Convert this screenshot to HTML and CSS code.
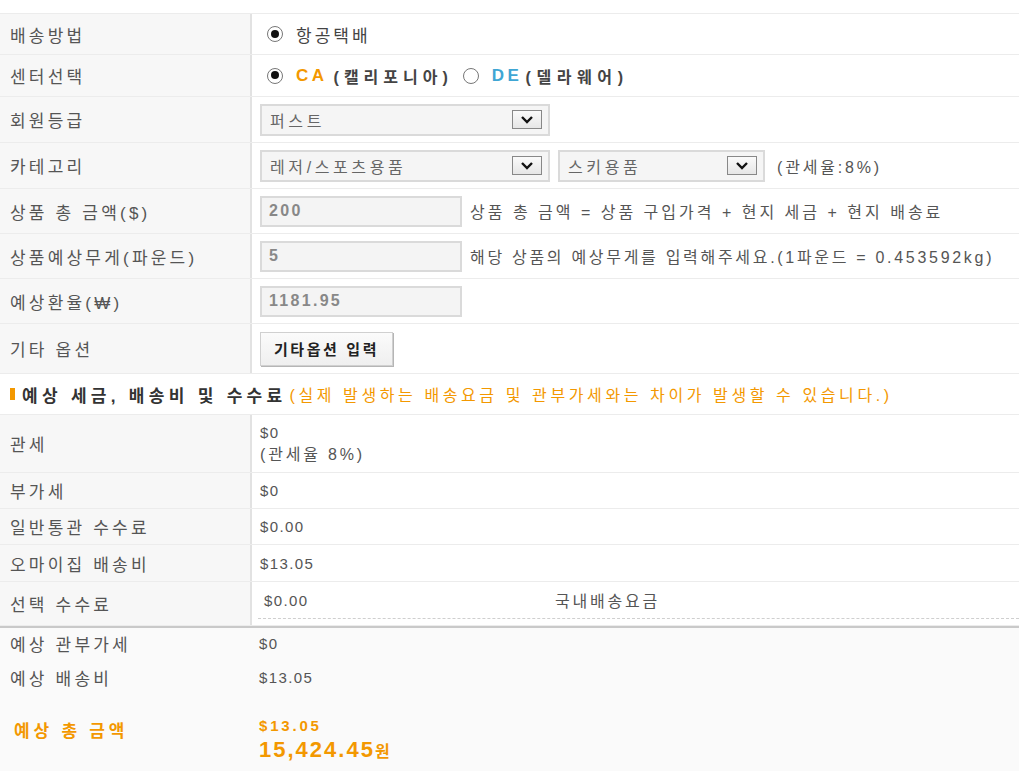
FILE: index.html
```html
<!DOCTYPE html>
<html lang="ko">
<head>
    <meta charset="UTF-8">
    <title>배송비 계산기</title>
    <link rel="stylesheet" href="styles.css">
</head>
<body>
    <div class="calc">
        <div class="form">
            <div class="row r1">
                <div class="th">배송방법</div>
                <div class="td">
                    <span class="radio on"></span><span class="opt">항공택배</span>
                </div>
            </div>
            <div class="row r2">
                <div class="th">센터선택</div>
                <div class="td">
                    <span class="radio on"></span><b class="ca">CA</b><b class="area">(캘리포니아)</b>
                    <span class="radio"></span><b class="de">DE</b><b class="area">(델라웨어)</b>
                </div>
            </div>
            <div class="row r3">
                <div class="th">회원등급</div>
                <div class="td">
                    <div class="select wide"><span>퍼스트</span><i class="arrow"><svg width="14" height="9" viewBox="0 0 14 9"><path d="M2 2l5 5 5-5" fill="none" stroke="#111" stroke-width="2.4"/></svg></i></div>
                </div>
            </div>
            <div class="row r4">
                <div class="th">카테고리</div>
                <div class="td">
                    <div class="select wide"><span>레저/스포츠용품</span><i class="arrow"><svg width="14" height="9" viewBox="0 0 14 9"><path d="M2 2l5 5 5-5" fill="none" stroke="#111" stroke-width="2.4"/></svg></i></div>
                    <div class="select narrow"><span>스키용품</span><i class="arrow"><svg width="14" height="9" viewBox="0 0 14 9"><path d="M2 2l5 5 5-5" fill="none" stroke="#111" stroke-width="2.4"/></svg></i></div>
                    <span class="note rate">(관세율:8%)</span>
                </div>
            </div>
            <div class="row r5">
                <div class="th">상품 총 금액($)</div>
                <div class="td">
                    <input class="inp" type="text" value="200" readonly>
                    <span class="note">상품 총 금액 = 상품 구입가격 + 현지 세금 + 현지 배송료</span>
                </div>
            </div>
            <div class="row r6">
                <div class="th">상품예상무게(파운드)</div>
                <div class="td">
                    <input class="inp" type="text" value="5" readonly>
                    <span class="note weight">해당 상품의 예상무게를 입력해주세요.(1파운드 = 0.453592kg)</span>
                </div>
            </div>
            <div class="row r7">
                <div class="th">예상환율(₩)</div>
                <div class="td">
                    <input class="inp" type="text" value="1181.95" readonly>
                </div>
            </div>
            <div class="row r8">
                <div class="th">기타 옵션</div>
                <div class="td">
                    <button class="btn" type="button">기타옵션 입력</button>
                </div>
            </div>
        </div>

        <h3 class="sec-title"><em></em>예상 세금, 배송비 및 수수료 <span>(실제 발생하는 배송요금 및 관부가세와는 차이가 발생할 수 있습니다.)</span></h3>

        <div class="form fees">
            <div class="row f1">
                <div class="th">관세</div>
                <div class="td val">$0<br><span class="kr">(관세율 8%)</span></div>
            </div>
            <div class="row f2">
                <div class="th">부가세</div>
                <div class="td val">$0</div>
            </div>
            <div class="row f3">
                <div class="th">일반통관 수수료</div>
                <div class="td val">$0.00</div>
            </div>
            <div class="row f4">
                <div class="th">오마이집 배송비</div>
                <div class="td val">$13.05</div>
            </div>
            <div class="row f5">
                <div class="th">선택 수수료</div>
                <div class="td val">
                    <div class="dotted">
                        <span class="fee">$0.00</span>
                        <span class="kr">국내배송요금</span>
                    </div>
                </div>
            </div>
        </div>

        <div class="summary">
            <div class="sum-row">
                <div class="sum-th">예상 관부가세</div>
                <div class="sum-td">$0</div>
            </div>
            <div class="sum-row">
                <div class="sum-th">예상 배송비</div>
                <div class="sum-td">$13.05</div>
            </div>
            <div class="sum-row total">
                <div class="sum-th">예상 총 금액</div>
                <div class="sum-td">
                    <b>$13.05</b>
                    <strong>15,424.45<small>원</small></strong>
                </div>
            </div>
        </div>
    </div>
</body>
</html>
```

FILE: styles.css
```css
*{
    margin: 0;
    padding: 0;
    box-sizing: border-box;
}
body{
    font-family: "Liberation Sans", "Noto Sans CJK KR", sans-serif;
    font-size: 15px;
    color: #444;
    background-color: #fff;
}
.calc{
    width: 1019px;
    padding-top: 13px;
}

/* 입력 테이블 */
.form{
    border-top: 1px solid #ececec;
}
.row{
    display: flex;
    border-bottom: 1px solid #ececec;
}
.th{
    width: 252px;
    flex-shrink: 0;
    display: flex;
    align-items: center;
    padding-left: 10px;
    background-color: #f7f7f7;
    border-right: 2px solid #e2e2e2;
    font-size: 17px;
    letter-spacing: 3.2px;
    color: #555;
}
.td{
    flex: 1;
    display: flex;
    align-items: center;
    padding-left: 8px;
    font-size: 16px;
    letter-spacing: 3px;
    color: #555;
}
.r1{ height: 41px; }
.r2{ height: 42px; }
.r3{ height: 46px; }
.r4{ height: 46px; }
.r5{ height: 45px; }
.r6{ height: 45px; }
.r7{ height: 45px; }
.r8{ height: 50px; }

/* 라디오 */
.radio{
    display: inline-block;
    position: relative;
    width: 16px;
    height: 16px;
    border: 1.5px solid #777;
    border-radius: 50%;
    background-color: #fff;
    margin: 0 13px 0 7px;
}
.radio.on::after{
    content: "";
    position: absolute;
    left: 2.5px;
    top: 2.5px;
    width: 8px;
    height: 8px;
    border-radius: 50%;
    background-color: #111;
}
.opt{
    font-size: 17px;
    letter-spacing: 3px;
    color: #444;
}
.ca, .de{
    font-size: 17px;
    letter-spacing: 3.5px;
}
.ca{
    margin-right: 6px;
    color: #f39800;
}
.de{
    margin-right: 3px;
    color: #3fa6d4;
}
.area{
    font-size: 16px;
    letter-spacing: 5px;
    color: #444;
}
.de + .area{
    letter-spacing: 5.6px;
}
.r2 .radio:not(.on){
    margin-left: 10px;
}

/* 셀렉트 */
.select{
    display: flex;
    align-items: center;
    justify-content: space-between;
    height: 32px;
    padding: 0 6px 0 8px;
    background-color: #f5f5f5;
    border: 2px solid #dadada;
    color: #666;
    letter-spacing: 3.6px;
}
.select.wide{
    width: 290px;
}
.select.narrow{
    width: 207px;
    margin-left: 8px;
}
.arrow{
    display: flex;
    align-items: center;
    justify-content: center;
    width: 30px;
    height: 19px;
    border: 1px solid #888;
    background: linear-gradient(#fafafa, #e6e6e6);
}
.note{
    margin-left: 8px;
    color: #555;
}
.weight{
    letter-spacing: 2.7px;
}
.rate{
    margin-left: 12px;
    letter-spacing: 2.8px;
}

/* 입력칸 */
.inp{
    width: 202px;
    height: 31px;
    padding-left: 7px;
    background-color: #f4f4f4;
    border: 2px solid #dadada;
    font-family: inherit;
    font-size: 16px;
    font-weight: bold;
    letter-spacing: 2.3px;
    color: #888;
    outline: none;
}
.btn{
    width: 133px;
    height: 34px;
    background: linear-gradient(#fbfbfb, #efefef);
    border: 1px solid #d0d0d0;
    box-shadow: 1px 1px 0 #b5b5b5;
    font-family: inherit;
    font-size: 15px;
    font-weight: bold;
    letter-spacing: 2.6px;
    color: #222;
}

/* 세금 안내 제목 */
.sec-title{
    display: flex;
    align-items: center;
    height: 40px;
    padding-left: 10px;
    font-size: 17px;
    letter-spacing: 4.3px;
    color: #333;
}
.sec-title em{
    display: inline-block;
    width: 5px;
    height: 12px;
    margin-right: 7px;
    background-color: #f39800;
}
.sec-title span{
    margin-left: 3px;
    font-size: 16px;
    font-weight: normal;
    letter-spacing: 3.6px;
    color: #f39800;
}

/* 세금 테이블 */
.fees .val{
    font-size: 15px;
    color: #555;
    letter-spacing: 1.4px;
}
.fees .kr{
    font-size: 16px;
    letter-spacing: 2.8px;
}
.f1{ height: 58px; }
.f1 .val{
    display: block;
    padding-top: 7px;
    line-height: 22px;
}
.f2{ height: 36px; }
.f3{ height: 36px; }
.f4{ height: 37px; }
.f5{ height: 44px; }
.f5 .val{
    align-items: stretch;
    padding-left: 6px;
}
.dotted{
    flex: 1;
    display: flex;
    align-items: center;
    margin-bottom: 6px;
    padding-left: 6px;
    border-bottom: 1px dashed #cfcfcf;
}
.fee{
    width: 291px;
}

/* 합계 */
.summary{
    height: 147px;
    padding-left: 10px;
    background-color: #fafafa;
    border-top: 2px solid #c9c9c9;
}
.sum-row{
    display: flex;
    align-items: center;
    height: 36px;
}
.sum-row:first-child{
    height: 31px;
}
.sum-th{
    width: 249px;
    font-size: 17px;
    letter-spacing: 3.2px;
    color: #555;
}
.sum-td{
    letter-spacing: 1.4px;
    color: #555;
}
.total{
    align-items: flex-start;
    height: auto;
    margin-top: 22px;
}
.total .sum-th{
    padding-left: 4px;
    font-weight: bold;
    letter-spacing: 3.8px;
    color: #f39800;
}
.total .sum-td{
    display: flex;
    flex-direction: column;
    color: #f39800;
}
.total b{
    font-size: 15px;
    letter-spacing: 2.8px;
}
.total strong{
    font-size: 22px;
    letter-spacing: 2px;
    line-height: 32px;
}
.total small{
    font-size: 16px;
    letter-spacing: 0;
}
```
